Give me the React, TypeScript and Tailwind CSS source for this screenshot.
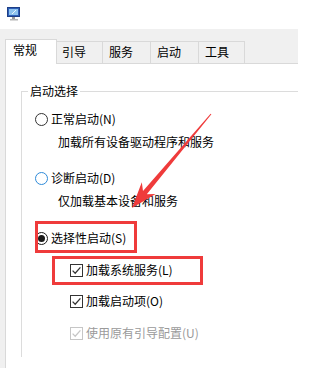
const font = { fontFamily: '"Noto Sans CJK SC", "Noto Sans", sans-serif' };

function MonitorIcon() {
  return (
    <svg width="14" height="14" viewBox="0 0 14 14">
      <rect x="0.5" y="0.5" width="12" height="9" fill="#2f5fb8" stroke="#1d3f86" />
      <rect x="2" y="2" width="9" height="6" fill="#8ec3ee" />
      <path d="M5 7 L9 3" stroke="#ffffff" strokeWidth="0.8" />
      <rect x="5" y="10" width="3" height="2" fill="#9a9a9a" />
      <rect x="3" y="12" width="8" height="1.5" fill="#b5b5b5" />
    </svg>
  );
}

function Radio({ checked, color = "#333333" }: { checked?: boolean; color?: string }) {
  return (
    <svg width="13" height="13" viewBox="0 0 13 13" className="shrink-0">
      <circle cx="6.5" cy="6.5" r="6" fill="#ffffff" stroke={color} />
      {checked && <circle cx="6.5" cy="6.5" r="3.5" fill="#1a1a1a" />}
    </svg>
  );
}

function Check({ disabled }: { disabled?: boolean }) {
  const c = disabled ? "#c6c6c6" : "#333333";
  return (
    <svg width="13" height="13" viewBox="0 0 13 13" className="shrink-0">
      <rect x="0.5" y="0.5" width="12" height="12" fill="#ffffff" stroke={c} />
      <path d="M2.6 6.6 L5.2 9.2 L10.4 3.4" fill="none" stroke={c} strokeWidth="1.3" />
    </svg>
  );
}

const tabs = [
  { label: "引导", w: "w-[46px]", pl: "pl-[5px]" },
  { label: "服务", w: "w-[48px]", pl: "pl-[6px]" },
  { label: "启动", w: "w-[48px]", pl: "pl-[6px]" },
  { label: "工具", w: "w-[46px]", pl: "pl-[6px]" },
];

export default function App() {
  return (
    <div className="relative h-[368px] w-[298px] overflow-hidden bg-[#f0f0f0] text-[12px] text-black" style={font}>
      {/* title bar */}
      <div className="h-[29px] bg-white pl-[7px] pt-[7px]">
        <MonitorIcon />
      </div>

      {/* tab strip */}
      <div className="flex items-end pl-[5px] pt-[10px]">
        <div className="relative z-10 -mb-px h-[25px] w-[52px] border border-b-0 border-[#d9d9d9] bg-white pl-[7px] pt-[2px] leading-[16px]">
          常规
        </div>
        {tabs.map((t) => (
          <div
            key={t.label}
            className={`h-[22px] ${t.w} ${t.pl} border-t border-r border-[#d9d9d9] pt-[2px] leading-[16px]`}
          >
            {t.label}
          </div>
        ))}
      </div>

      {/* tab panel, runs past the right edge of the crop */}
      <div className="ml-[5px] h-[400px] w-[340px] border-l border-t border-[#d9d9d9] bg-white pl-[15px] pt-[19px]">
        <fieldset className="w-[320px] border-l border-t border-[#dcdcdc] pb-4">
          <legend className="ml-[6px] px-[2px] leading-[16px]">启动选择</legend>
          <div className="flex flex-col leading-[16px]">
            <div className="mt-[12px] flex h-[16px] items-center gap-[3px] pl-[13px]">
              <Radio />
              <span>正常启动(N)</span>
            </div>
            <div className="mt-[7px] h-[16px] pl-[36px]">加载所有设备驱动程序和服务</div>
            <div className="mt-[20px] flex h-[16px] items-center gap-[3px] pl-[13px]">
              <Radio color="#2f8ad8" />
              <span>诊断启动(D)</span>
            </div>
            <div className="mt-[7px] h-[16px] pl-[36px]">仅加载基本设备和服务</div>
            <div className="mt-[21px] flex h-[16px] items-center gap-[3px] pl-[13px]">
              <Radio checked color="#1a1a1a" />
              <span>选择性启动(S)</span>
            </div>
            <div className="mt-[16px] flex h-[16px] items-center gap-[3px] pl-[48px]">
              <Check />
              <span>加载系统服务(L)</span>
            </div>
            <div className="mt-[15px] flex h-[16px] items-center gap-[3px] pl-[48px]">
              <Check />
              <span>加载启动项(O)</span>
            </div>
            <div className="mt-[16px] flex h-[16px] items-center gap-[3px] pl-[48px] text-[#9a9a9a]">
              <Check disabled />
              <span>使用原有引导配置(U)</span>
            </div>
          </div>
        </fieldset>
      </div>

      {/* annotations */}
      <div className="absolute left-[35px] top-[221px] h-[32px] w-[102px] border-[3px] border-[#ef3b3b]" />
      <div className="absolute left-[52px] top-[256px] h-[29px] w-[151px] border-[3px] border-[#ef3b3b]" />
      <svg className="absolute left-0 top-0" width="298" height="368" viewBox="0 0 298 368">
        <polygon
          points="132,208 155.6,193.9 146.8,194.3 211.4,114.3 210.6,113.7 143,191.1 141.8,182.3"
          fill="#ef3b3b"
        />
      </svg>
    </div>
  );
}
